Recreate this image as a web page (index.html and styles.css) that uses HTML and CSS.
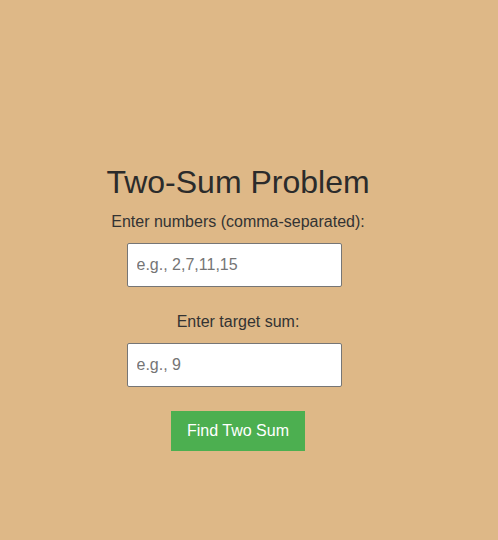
FILE: index.html
```html
<!DOCTYPE html>
<html>
<head>
<meta charset="utf-8">
<title>Two-Sum Problem</title>
<link rel="stylesheet" href="styles.css">
</head>
<body>
<div class="container">
  <h1 class="title">Two-Sum Problem</h1>
  <label class="label" for="nums">Enter numbers (comma-separated):</label>
  <div class="field"><input class="input" id="nums" type="text" placeholder="e.g., 2,7,11,15"></div>
  <label class="label label-second" for="target">Enter target sum:</label>
  <div class="field"><input class="input" id="target" type="text" placeholder="e.g., 9"></div>
  <div class="actions"><button class="button" type="button">Find Two Sum</button></div>
</div>
</body>
</html>
```

FILE: styles.css
```css
html, body {
  margin: 0;
  padding: 0;
}
body {
  background: #deb887;
  font-family: "Liberation Sans", Arial, sans-serif;
  color: #333;
  min-height: 540px;
}
.container {
  width: 476px;
  padding-top: 164px;
  display: flex;
  flex-direction: column;
  align-items: center;
}
.title {
  margin: 0;
  font-size: 32px;
  font-weight: normal;
  line-height: 37px;
  color: #2b2b2b;
}
.label {
  display: block;
  margin-top: 12px;
  font-size: 16px;
  line-height: 18px;
  color: #333;
}
.label-second {
  margin-top: 26px;
}
.field {
  margin-top: 12px;
  padding-right: 8px;
}
.input {
  display: block;
  box-sizing: border-box;
  width: 215px;
  height: 44px;
  margin: 0;
  padding: 0 9px;
  border: 1px solid #767676;
  border-radius: 2px;
  background: #fff;
  font-family: "Liberation Sans", Arial, sans-serif;
  font-size: 16px;
  color: #333;
  outline: none;
}
.input::placeholder {
  color: #757575;
}
.actions {
  margin-top: 24px;
}
.button {
  display: block;
  box-sizing: border-box;
  width: 134px;
  height: 40px;
  margin: 0;
  padding: 0;
  border: none;
  background: #4caf50;
  color: #fff;
  font-family: "Liberation Sans", Arial, sans-serif;
  font-size: 16px;
  cursor: pointer;
}
```
